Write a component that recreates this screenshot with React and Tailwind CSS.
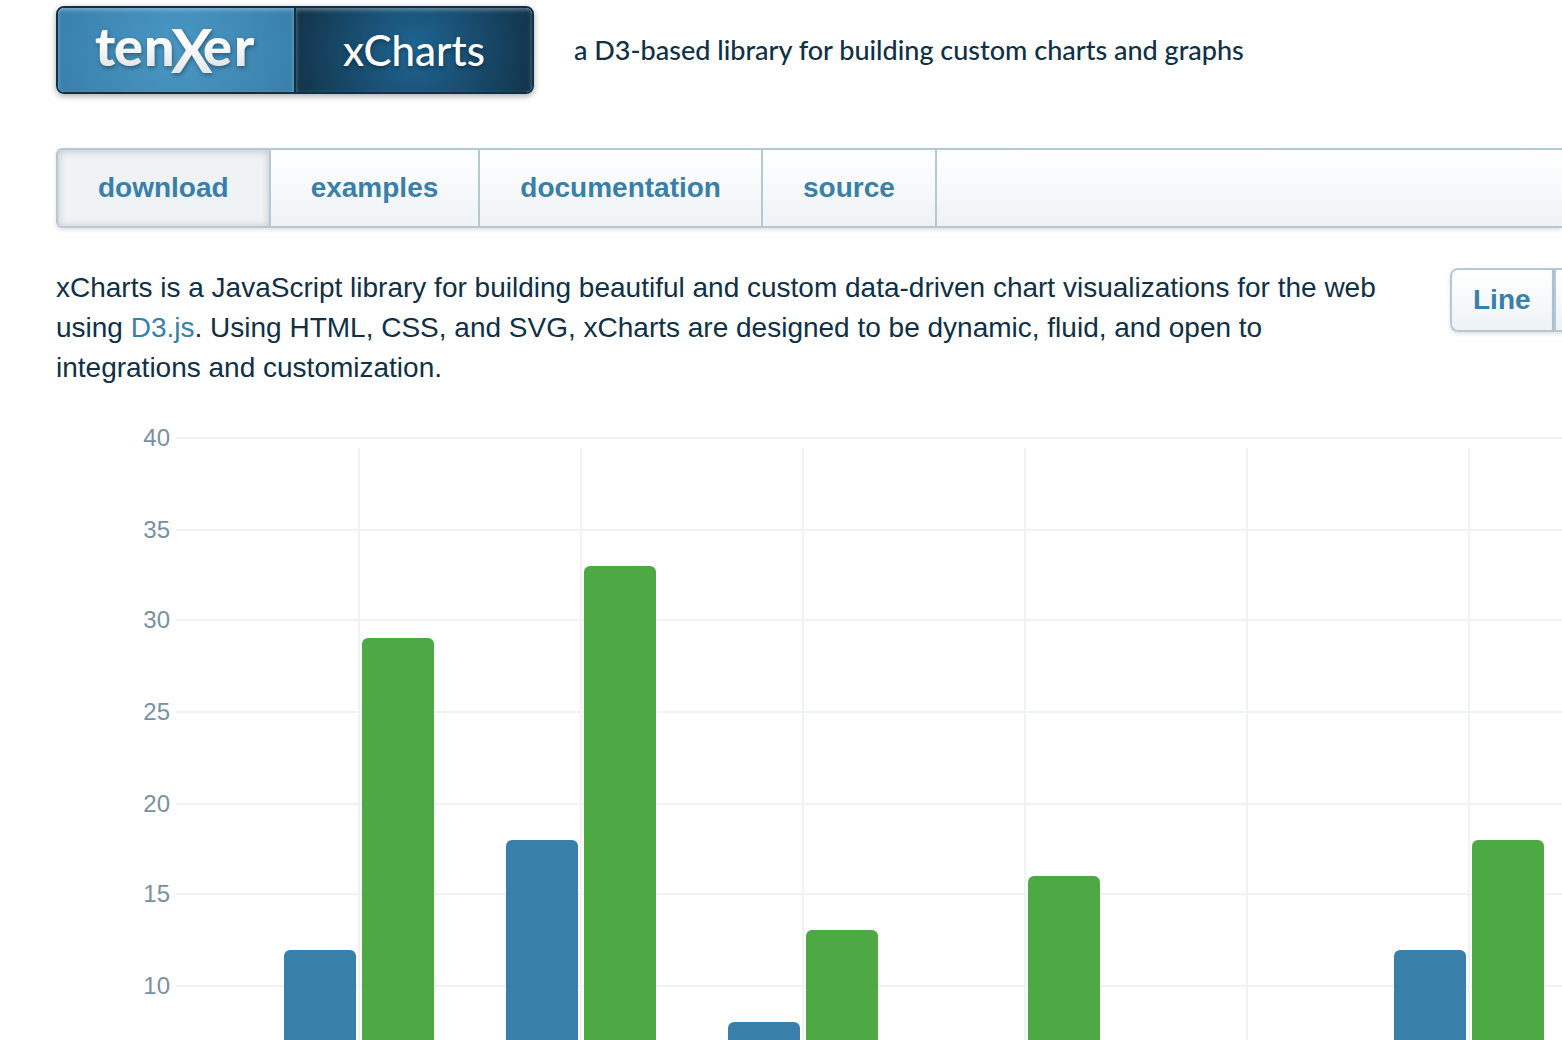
import React from 'react';

const NAV_ITEMS = ['download', 'examples', 'documentation', 'source'];

const TICKS = [40, 35, 30, 25, 20, 15, 10];

const DATA = [
  { blue: 12, green: 29 },
  { blue: 18, green: 33 },
  { blue: 8, green: 13 },
  { blue: 6, green: 16 },
  { blue: 4, green: 5 },
  { blue: 12, green: 18 },
];

// snap to even pixels so the 2px lines stay crisp
const yScale = (value) => Math.round((40 - value) * 9.125) * 2 + 18;
const xScale = (index) => 303 + index * 222;

function Brand() {
  return (
    <a
      href="#home"
      className="flex h-[88px] w-[478px] shrink-0 overflow-hidden rounded-lg border-2 border-[#0f3047] shadow-[0_2px_6px_rgba(0,0,0,0.35)]"
    >
      <span className="flex flex-1 bg-[radial-gradient(circle_at_center,#4a97c5,#3880aa)] shadow-[inset_0_2px_4px_rgba(255,255,255,0.35)]">
        <svg
          className="h-full w-full [filter:drop-shadow(1px_2px_2px_rgba(0,0,0,0.35))]"
          viewBox="0 0 236 84"
          fontWeight="900"
          role="img"
          aria-label="tenXer"
        >
          <defs>
            <linearGradient id="silver" x1="0" y1="0" x2="0" y2="1">
              <stop offset="0.4" stopColor="#ffffff" />
              <stop offset="1" stopColor="#d8dce0" />
            </linearGradient>
          </defs>
          <g fill="url(#silver)" fontFamily='Lato, "Open Sans", sans-serif'>
            <text x="37 56 86" y="58" fontSize="54">ten</text>
            <text x="113" y="65" fontSize="62" fontWeight="700">X</text>
            <text x="145 176" y="58" fontSize="54">er</text>
          </g>
        </svg>
      </span>
      <span className="flex flex-1 items-center justify-center border-l-2 border-[#0f3047] bg-[radial-gradient(circle_at_center,#1f6593,#123349)] font-[Lato,sans-serif] text-[42px] font-medium text-white shadow-[inset_0_2px_4px_rgba(255,255,255,0.35)] [text-shadow:0_2px_4px_rgba(0,0,0,0.4)]">
        xCharts
      </span>
    </a>
  );
}

function Chart() {
  return (
    <svg className="h-full w-full" role="img" aria-label="Bar chart">
      {TICKS.map((tick) => (
        <g key={tick}>
          <rect x="120" y={yScale(tick) - 1} width="100%" height="2" fill="#eff3f6" />
          <text x="114" y={yScale(tick) + 8} textAnchor="end" fontSize="24" fill="#7891a2">
            {tick}
          </text>
        </g>
      ))}
      {DATA.map((item, i) => (
        <g key={i}>
          <rect x={xScale(i) - 1} y="28" width="2" height="100%" fill="#eff3f6" />
          <rect x={xScale(i) - 75} y={yScale(item.blue)} width="72" height={yScale(0) - yScale(item.blue)} rx="6" fill="#3880aa" />
          <rect x={xScale(i) + 3} y={yScale(item.green)} width="72" height={yScale(0) - yScale(item.green)} rx="6" fill="#4da944" />
        </g>
      ))}
    </svg>
  );
}

export default function App() {
  return (
    <div className="flex h-screen flex-col overflow-hidden bg-white pl-14 font-['Liberation_Sans',Arial,sans-serif] text-[28px] text-[#0f3047]">
      <header className="flex items-center pt-1.5">
        <Brand />
        <p className="ml-10 font-[Lato,sans-serif] text-[27px] font-medium">
          a D3-based library for building custom charts and graphs
        </p>
      </header>

      <nav className="mt-[54px] flex h-20 shrink-0 rounded-l-md border-2 border-r-0 border-[#b5c8d5] bg-linear-to-b from-white to-[#eff3f6] shadow-[0_2px_4px_rgba(0,0,0,0.12)]">
        {NAV_ITEMS.map((item, i) => (
          <a
            key={item}
            href={`#${item}`}
            className={`flex items-center border-r-2 border-[#b5c8d5] px-10 font-bold text-[#3880aa] ${
              i === 0 ? 'bg-[#eff3f6] shadow-[inset_0_1px_8px_rgba(0,0,0,0.2)]' : ''
            }`}
          >
            {item}
          </a>
        ))}
      </nav>

      <main className="flex min-h-0 flex-1 flex-col pt-10">
        <div className="flex items-start justify-between">
          <p className="max-w-[1340px] leading-10">
            xCharts is a JavaScript library for building beautiful and custom data-driven chart
            visualizations for the web using <a href="#d3" className="text-[#3880aa]">D3.js</a>. Using
            HTML, CSS, and SVG, xCharts are designed to be dynamic, fluid, and open to integrations
            and customization.
          </p>
          <div className="flex h-16 w-28 shrink-0 font-bold text-[#3880aa]">
            <button className="shrink-0 rounded-l-lg border-2 border-[#b5c8d5] bg-linear-to-b from-white to-[#eff3f6] px-[21px] shadow-[0_2px_4px_rgba(0,0,0,0.12)]">
              Line
            </button>
            <button className="shrink-0 rounded-r-lg border-2 border-[#b5c8d5] bg-linear-to-b from-white to-[#eff3f6] px-[21px] shadow-[0_2px_4px_rgba(0,0,0,0.12)]">
              Bar
            </button>
          </div>
        </div>
        <div className="mt-8 min-h-0 flex-1">
          <Chart />
        </div>
      </main>
    </div>
  );
}
